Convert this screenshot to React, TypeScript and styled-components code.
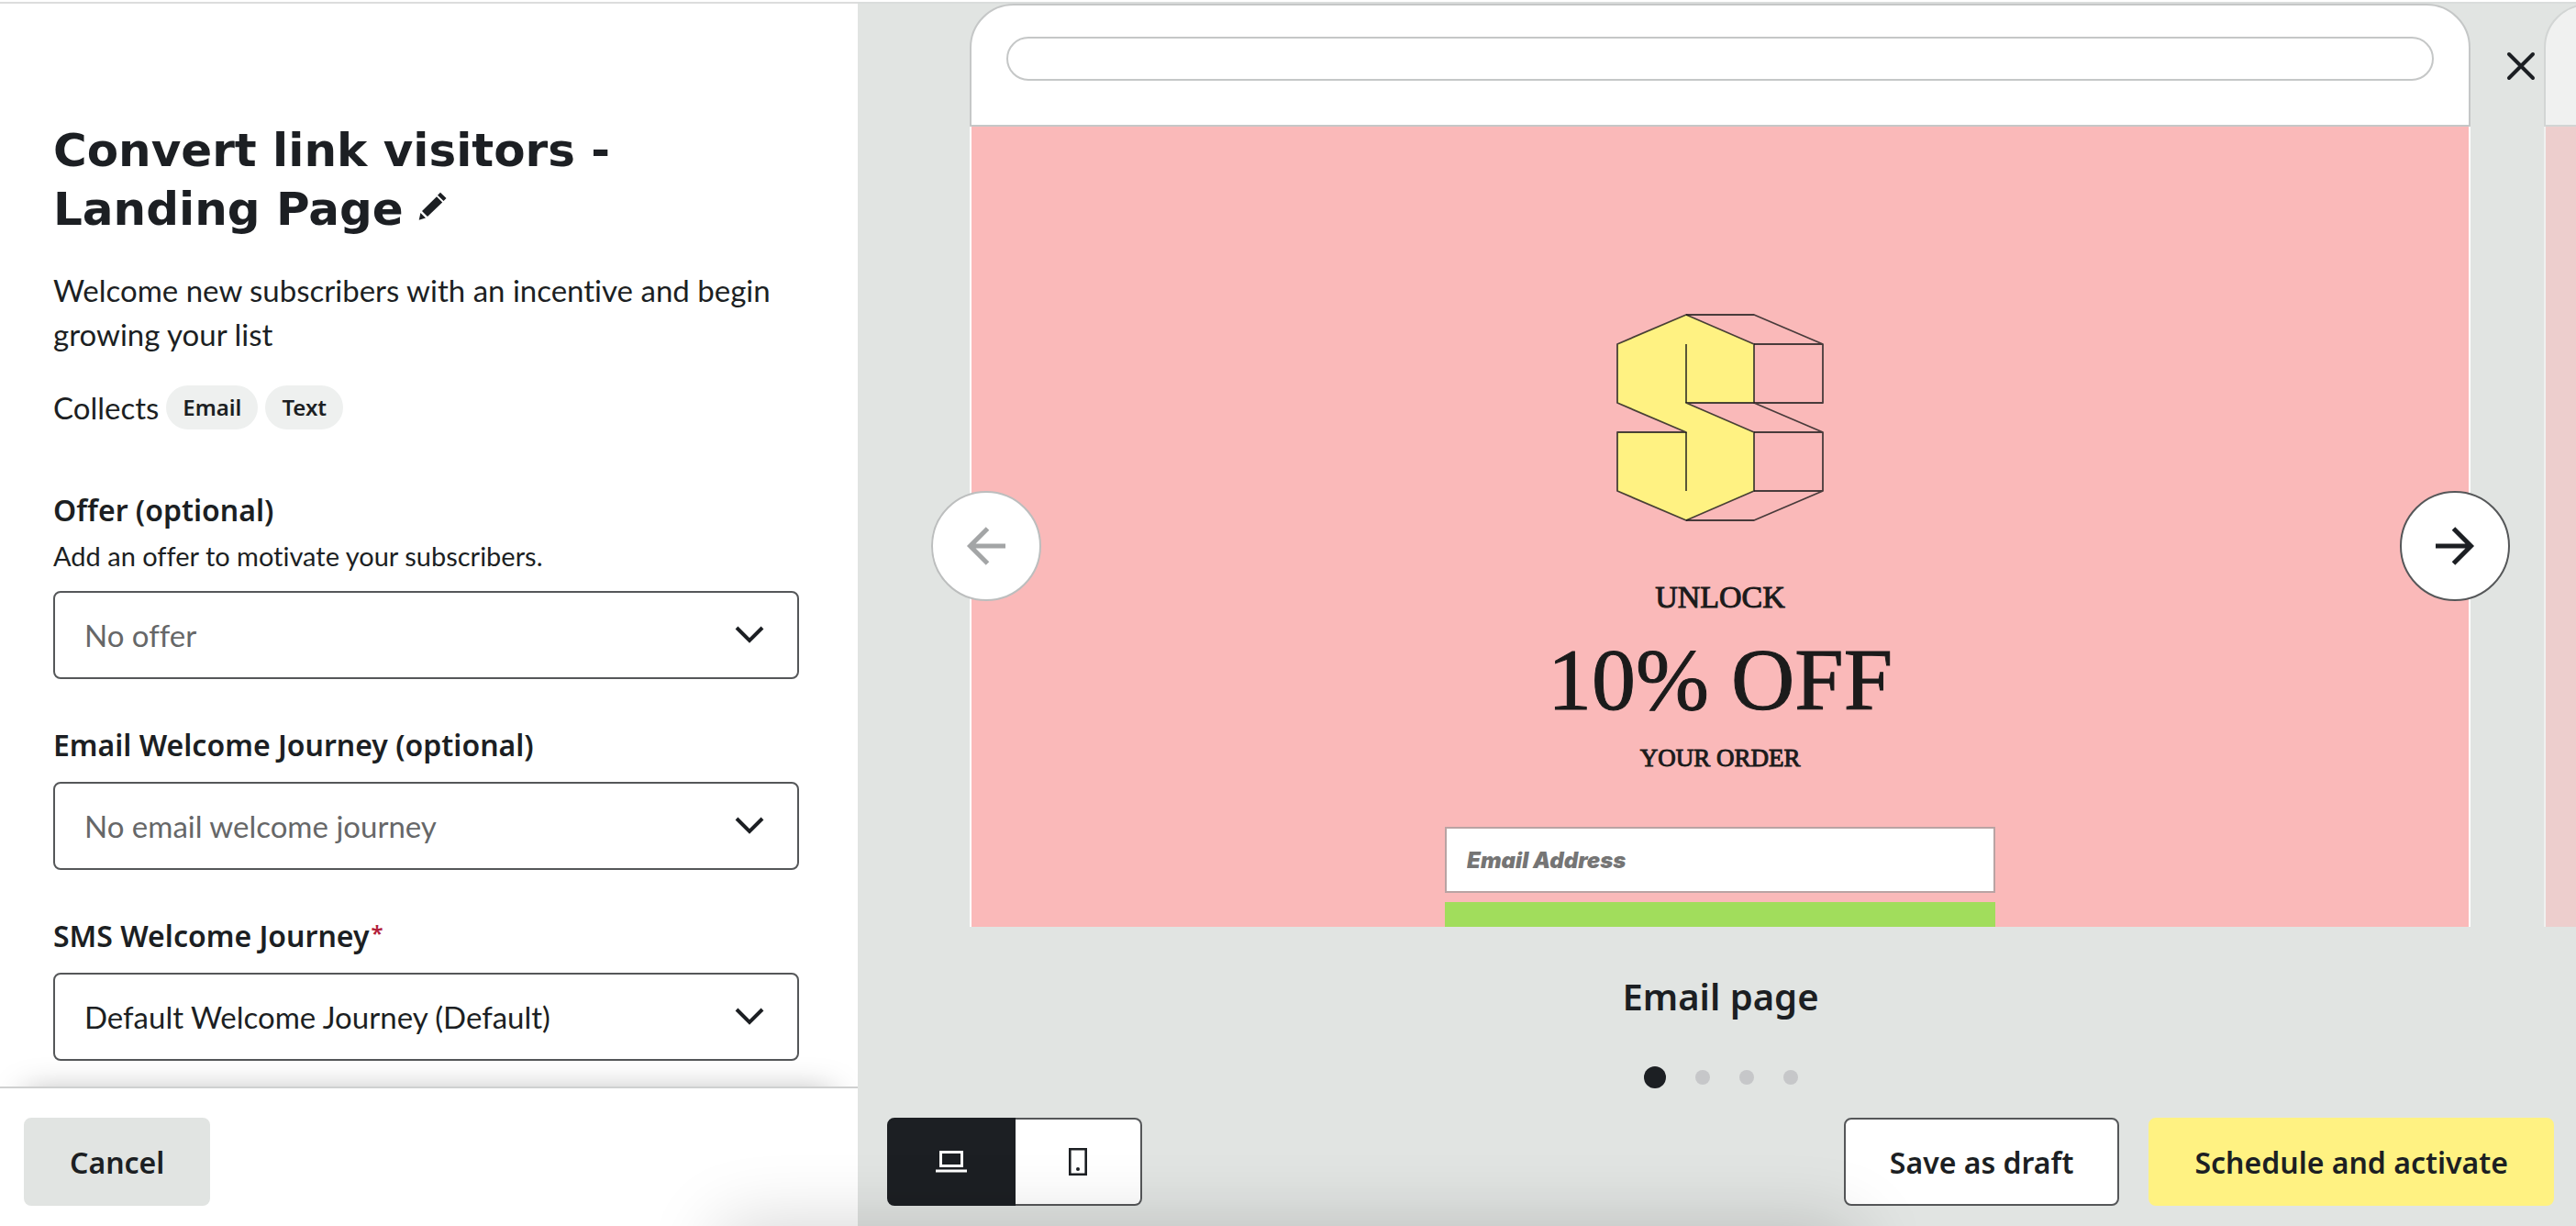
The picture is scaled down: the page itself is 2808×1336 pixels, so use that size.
import React from "react";
import styled, { createGlobalStyle } from "styled-components";

const ink = "#1c1f23";
const line = "#555759";
const canvas = "#e1e4e2";
const yellow = "#fff282";
const bodyFont = `Lato, "Open Sans", sans-serif`;
const boldFont = `"Noto Sans", "Open Sans", sans-serif`;

const GlobalStyle = createGlobalStyle`
  * { box-sizing: border-box; }
  body {
    margin: 0;
    background: #fff;
    color: ${ink};
    font-family: ${bodyFont};
    font-variant-ligatures: none;
  }
  h1, h2, p { margin: 0; }
  button, select, input { font: inherit; color: inherit; margin: 0; }
  button { cursor: pointer; padding: 0; }
`;

const Page = styled.main`
  position: relative;
  display: grid;
  grid-template-columns: 33.3% 1fr;
  height: 100vh;
  padding-top: 2px;
  overflow: hidden;
`;

const Settings = styled.section`
  display: flex;
  flex-direction: column;
  min-height: 0;
  border-top: 2px solid #dcdddd;
  background: #fff;
`;

const Form = styled.form`
  flex: 1;
  min-height: 0;
  overflow: hidden;
  padding: 128px 64px 0 58px;
`;

const Title = styled.h1`
  font-family: "DejaVu Sans", sans-serif;
  font-size: 50px;
  font-weight: 700;
  line-height: 64px;
`;

const EditButton = styled.button`
  display: inline-flex;
  border: 0;
  background: none;
  margin-left: 16px;
  vertical-align: 4px;
`;

const Intro = styled.p`
  margin-top: 32px;
  font-size: 33px;
  line-height: 48px;
`;

const Collects = styled.div`
  display: flex;
  align-items: center;
  gap: 8px;
  margin: 32px 0 64px;
  font-size: 33px;
  line-height: 48px;
`;

const Pill = styled.span`
  padding: 0 18px;
  border-radius: 24px;
  background: #eef0ef;
  font-family: ${boldFont};
  font-size: 24px;
  font-weight: 600;
`;

const Field = styled.div`
  margin-bottom: 48px;
`;

const Label = styled.label`
  display: block;
  font-family: ${boldFont};
  font-size: 32px;
  font-weight: 600;
  line-height: 48px;
`;

const Required = styled.span`
  margin-left: 2px;
  color: #b3213b;
  font-size: 24px;
  line-height: 24px;
  vertical-align: 6px;
`;

const Help = styled.p`
  margin-top: 4px;
  font-size: 29px;
  line-height: 44px;
`;

const SelectBox = styled.div`
  position: relative;
  margin-top: 16px;
  > svg {
    position: absolute;
    right: 38px;
    top: 36px;
    pointer-events: none;
  }
`;

const Select = styled.select<{ $muted?: boolean }>`
  display: block;
  width: 100%;
  height: 96px;
  padding: 0 80px 0 32px;
  appearance: none;
  border: 2px solid ${line};
  border-radius: 8px;
  background: #fff;
  color: ${(p) => (p.$muted ? "#666768" : ink)};
  font-size: 33px;
`;

const SettingsFooter = styled.footer`
  position: relative;
  height: 152px;
  padding: 32px 26px 0;
  border-top: 2px solid #cfd0d0;
  background: #fff;
  box-shadow: 0 -20px 36px -28px rgba(0, 0, 0, 0.35);
`;

const Button = styled.button<{ $tone?: "plain" | "primary" }>`
  height: 96px;
  padding: 0 48px;
  border: 2px solid
    ${(p) => (p.$tone === "plain" ? line : p.$tone === "primary" ? yellow : canvas)};
  border-radius: 8px;
  background: ${(p) => (p.$tone === "plain" ? "#fff" : p.$tone === "primary" ? yellow : canvas)};
  font-family: ${boldFont};
  font-size: 32px;
  font-weight: 600;
`;

const Preview = styled.section`
  position: relative;
  display: flex;
  flex-direction: column;
  min-width: 0;
  min-height: 0;
  padding: 0 24px 22px 32px;
  border-top: 2px solid #dadddc;
  background: ${canvas};
  overflow: hidden;
`;

const Carousel = styled.div`
  position: relative;
  display: flex;
  flex: 1;
  min-height: 0;
  gap: 80px;
  padding: 0 91px 0 90px;
`;

const Slide = styled.article<{ $next?: boolean }>`
  display: flex;
  flex: 0 0 100%;
  flex-direction: column;
  min-width: 0;
  opacity: ${(p) => (p.$next ? 0.5 : 1)};
`;

const BrowserBar = styled.div`
  height: 134px;
  padding: 34px 38px 0;
  border: 2px solid #c5c7c7;
  border-radius: 48px 48px 0 0;
  background: #fff;
`;

const AddressBar = styled.div`
  height: 48px;
  border: 2px solid #c5c7c7;
  border-radius: 24px;
`;

const Landing = styled.div`
  display: flex;
  flex: 1;
  flex-direction: column;
  align-items: center;
  min-height: 0;
  padding-top: 204px;
  border: solid #fff;
  border-width: 0 2px;
  background: #fab9b9;
  color: #1b1b1b;
  font-family: "Liberation Serif", serif;
  text-align: center;
  -webkit-text-stroke: 1px;
  overflow: hidden;
  > svg {
    flex: none;
    margin-bottom: 63px;
  }
`;

const OfferLead = styled.p`
  font-size: 34px;
  line-height: 40px;
`;

const OfferBig = styled.p`
  margin: 20px 0 15px;
  font-size: 96px;
  line-height: 100px;
`;

const OfferTail = styled.p`
  font-size: 27px;
  line-height: 40px;
`;

const EmailInput = styled.input`
  flex: none;
  width: 600px;
  height: 72px;
  margin-top: 55px;
  padding: 0 22px;
  border: 2px solid #b9a3a3;
  border-radius: 0;
  background: #fff;
  font: italic 900 24px Inter, sans-serif;
  -webkit-text-stroke: 0;
  &::placeholder { color: #757575; opacity: 1; }
`;

const SubmitButton = styled.button`
  flex: none;
  width: 600px;
  height: 72px;
  margin-top: 10px;
  border: 0;
  background: #a1dd5c;
`;

const ArrowButton = styled.button<{ $side: "left" | "right" }>`
  position: absolute;
  top: 531px;
  ${(p) => p.$side}: 48px;
  display: grid;
  place-items: center;
  width: 120px;
  height: 120px;
  border: 2px solid ${line};
  border-radius: 50%;
  background: #fff;
  color: ${ink};
  &:disabled {
    border-color: #bcbebe;
    color: #a3a5a6;
  }
`;

const CloseButton = styled.button`
  position: absolute;
  top: 44px;
  right: 36px;
  display: grid;
  place-items: center;
  width: 48px;
  height: 48px;
  border: 0;
  background: none;
`;

const SlideName = styled.h2`
  margin-top: 52px;
  font-family: ${boldFont};
  font-size: 40px;
  font-weight: 600;
  line-height: 48px;
  text-align: center;
`;

const Dots = styled.div`
  display: flex;
  align-items: center;
  justify-content: center;
  gap: 32px;
  height: 24px;
  margin: 52px 0 32px;
`;

const Dot = styled.button<{ $active?: boolean }>`
  width: ${(p) => (p.$active ? 24 : 16)}px;
  height: ${(p) => (p.$active ? 24 : 16)}px;
  border: 0;
  border-radius: 50%;
  background: ${(p) => (p.$active ? ink : "#c6c7c9")};
`;

const Toolbar = styled.div`
  display: flex;
  gap: 32px;
`;

const DeviceToggle = styled.div`
  display: flex;
  height: 96px;
  margin-right: auto;
`;

const DeviceButton = styled.button<{ $active?: boolean }>`
  display: grid;
  place-items: center;
  width: ${(p) => (p.$active ? 140 : 138)}px;
  border: 2px solid ${(p) => (p.$active ? ink : line)};
  border-left-width: ${(p) => (p.$active ? 2 : 0)}px;
  border-radius: ${(p) => (p.$active ? "8px 0 0 8px" : "0 8px 8px 0")};
  background: ${(p) => (p.$active ? ink : "#fff")};
  color: ${(p) => (p.$active ? "#fff" : ink)};
`;

const DockShadow = styled.div`
  position: absolute;
  left: 28%;
  right: 28%;
  top: 100%;
  height: 120px;
  box-shadow: 0 0 80px rgba(0, 0, 0, 0.18);
  pointer-events: none;
`;

const Pencil = () => (
  <svg width="32" height="32" viewBox="0 0 32 32" fill="currentColor" aria-hidden="true">
    <path d="M24 0.7 30.5 7 27.5 10 21 3.7ZM20 5.2 26.2 11.4 10 27 4 21ZM2.4 23 8 28.6 0.7 30.7Z" />
  </svg>
);

const Chevron = () => (
  <svg width="32" height="24" viewBox="0 0 32 24" fill="none" stroke={ink} strokeWidth="4" aria-hidden="true">
    <path d="M2 4 16 18 30 4" />
  </svg>
);

const Arrow = ({ flip }: { flip?: boolean }) => (
  <svg width="44" height="44" viewBox="0 0 44 44" fill="none" stroke="currentColor" strokeWidth="5" aria-hidden="true">
    <path d={flip ? "M43 22H5M23.5 3 4.5 22 23.5 41" : "M1 22H39M20.5 3 39.5 22 20.5 41"} />
  </svg>
);

const Logo = () => (
  <svg width="226" height="226" viewBox="-1 -1 226 226" stroke="#1b1b1b" strokeOpacity="0.8" strokeWidth="1.8" strokeLinejoin="round" aria-hidden="true">
    <path
      fill={yellow}
      d="M75 0 149 32V96H75L149 128V192L75 224 0 192V128H75L0 96V32Z"
    />
    <path
      fill="none"
      d="M75 32V96M75 128V192M75 0H149L224 32V96H149L224 128V192L149 224H75M149 32H224M149 128H224M149 192H224"
    />
  </svg>
);

interface SelectFieldProps {
  id: string;
  label: string;
  help?: string;
  value: string;
  muted?: boolean;
  required?: boolean;
}

const SelectField = ({ id, label, help, value, muted, required }: SelectFieldProps) => (
  <Field>
    <Label htmlFor={id}>
      {label}
      {required && <Required>*</Required>}
    </Label>
    {help && <Help>{help}</Help>}
    <SelectBox>
      <Select id={id} $muted={muted}>
        <option>{value}</option>
      </Select>
      <Chevron />
    </SelectBox>
  </Field>
);

export default function App() {
  return (
    <>
      <GlobalStyle />
      <Page>
        <Settings>
          <Form>
            <Title>
              Convert link visitors - Landing Page
              <EditButton type="button" aria-label="Edit name">
                <Pencil />
              </EditButton>
            </Title>
            <Intro>Welcome new subscribers with an incentive and begin growing your list</Intro>
            <Collects>
              Collects
              <Pill>Email</Pill>
              <Pill>Text</Pill>
            </Collects>
            <SelectField
              id="offer"
              label="Offer (optional)"
              help="Add an offer to motivate your subscribers."
              value="No offer"
              muted
            />
            <SelectField id="email-journey" label="Email Welcome Journey (optional)" value="No email welcome journey" muted />
            <SelectField id="sms-journey" label="SMS Welcome Journey" value="Default Welcome Journey (Default)" required />
          </Form>
          <SettingsFooter>
            <Button type="button">Cancel</Button>
          </SettingsFooter>
        </Settings>

        <Preview>
          <Carousel>
            <Slide>
              <BrowserBar>
                <AddressBar />
              </BrowserBar>
              <Landing>
                <Logo />
                <OfferLead>UNLOCK</OfferLead>
                <OfferBig>10% OFF</OfferBig>
                <OfferTail>YOUR ORDER</OfferTail>
                <EmailInput type="email" placeholder="Email Address" aria-label="Email Address" />
                <SubmitButton type="button" aria-label="Continue" />
              </Landing>
            </Slide>
            <Slide $next aria-hidden="true">
              <BrowserBar />
              <Landing />
            </Slide>
            <ArrowButton $side="left" disabled aria-label="Previous page">
              <Arrow flip />
            </ArrowButton>
            <ArrowButton $side="right" aria-label="Next page">
              <Arrow />
            </ArrowButton>
          </Carousel>
          <SlideName>Email page</SlideName>
          <Dots>
            <Dot $active aria-label="Page 1" />
            <Dot aria-label="Page 2" />
            <Dot aria-label="Page 3" />
            <Dot aria-label="Page 4" />
          </Dots>
          <Toolbar>
            <DeviceToggle>
              <DeviceButton $active aria-label="Desktop preview">
                <svg width="34" height="26" viewBox="0 0 34 26" fill="none" stroke="currentColor" strokeWidth="3" aria-hidden="true">
                  <path d="M5.5 2.5H28.5V17.5H5.5ZM0 23H34" />
                </svg>
              </DeviceButton>
              <DeviceButton aria-label="Mobile preview">
                <svg width="20" height="30" viewBox="0 0 20 30" fill="none" stroke="currentColor" strokeWidth="2.6" aria-hidden="true">
                  <path d="M1.3 1.3H18.7V28.7H1.3Z" />
                  <circle cx="10" cy="23" r="2" fill="currentColor" stroke="none" />
                </svg>
              </DeviceButton>
            </DeviceToggle>
            <Button $tone="plain">Save as draft</Button>
            <Button $tone="primary">Schedule and activate</Button>
          </Toolbar>
          <CloseButton aria-label="Close">
            <svg width="32" height="32" viewBox="0 0 32 32" fill="none" stroke={ink} strokeWidth="4" strokeLinecap="round" aria-hidden="true">
              <path d="M3 3 29 29M29 3 3 29" />
            </svg>
          </CloseButton>
        </Preview>
        <DockShadow />
      </Page>
    </>
  );
}
